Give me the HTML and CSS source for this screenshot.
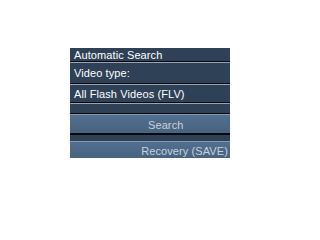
FILE: index.html
```html
<!DOCTYPE html>
<html>
<head>
<meta charset="utf-8">
<link rel="stylesheet" href="styles.css">
</head>
<body>
<div class="panel">
  <div class="row title">Automatic Search</div>
  <div class="row label">Video type:</div>
  <div class="row select">All Flash Videos (FLV)</div>
  <div class="row blank"></div>
  <div class="btn search">Search</div>
  <div class="gap"></div>
  <div class="btn recovery">Recovery (SAVE)</div>
</div>
</body>
</html>
```
FILE: styles.css
```css
html, body {
  margin: 0;
  padding: 0;
  background: #ffffff;
}
.panel {
  margin: 48px 0 0 70px;
  width: 160px;
  overflow: hidden;
  font-family: "Liberation Sans", Arial, sans-serif;
  font-size: 11px;
  letter-spacing: 0.1px;
  white-space: nowrap;
}
.row {
  background: #2e4156;
  color: #ffffff;
  padding-left: 4px;
  border-top: 1px solid #97a4b4;
  border-bottom: 1px solid #05080c;
  display: flex;
  align-items: center;
}
.title {
  border-top: none;
  height: 13px;
}
.label {
  height: 20px;
}
.select {
  height: 16px;
  padding-top: 1px;
}
.blank {
  height: 9px;
}
.btn {
  background: linear-gradient(#526f91, #48637f);
  color: #c9d1da;
  border-top: 1px solid #8599b1;
  display: flex;
  align-items: center;
}
.search {
  height: 16px;
  padding-top: 2px;
  padding-left: 78px;
  border-bottom: 2px solid #05080c;
}
.gap {
  height: 6px;
  background: #2e4156;
}
.recovery {
  height: 14px;
  padding-top: 2px;
  justify-content: flex-end;
  padding-right: 2px;
}
```
